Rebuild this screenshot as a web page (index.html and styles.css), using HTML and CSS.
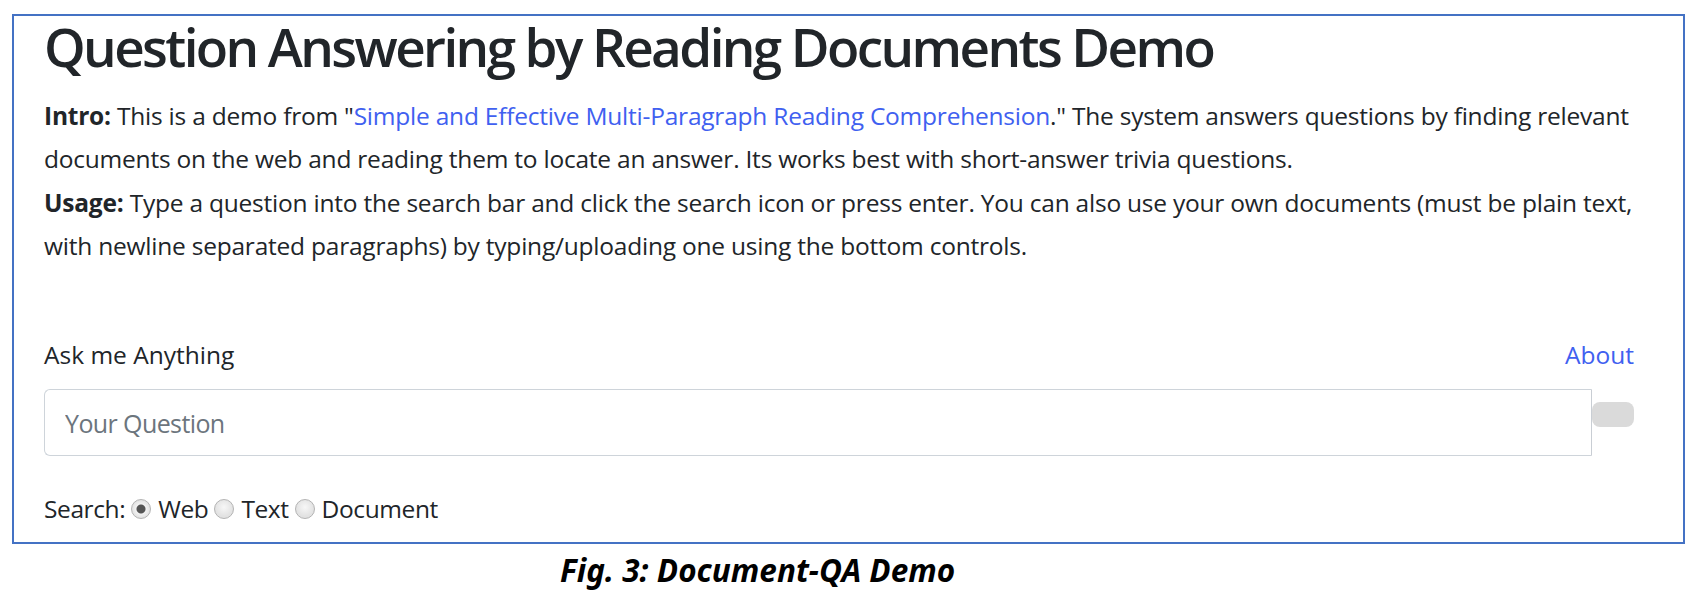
FILE: index.html
```html
<!DOCTYPE html>
<html lang="en">
<head>
<meta charset="utf-8">
<title>Document-QA Demo</title>
<link rel="stylesheet" href="styles.css">
</head>
<body>
<div class="frame">
  <h1 class="title">Question Answering by Reading Documents Demo</h1>
  <p class="intro"><b>Intro:</b> This is a demo from "<a class="link" href="#">Simple and Effective Multi-Paragraph Reading Comprehension</a>." The system answers questions by finding relevant documents on the web and reading them to locate an answer. Its works best with short-answer trivia questions.<br><b>Usage:</b> Type a question into the search bar and click the search icon or press enter. You can also use your own documents (must be plain text, with newline separated paragraphs) by typing/uploading one using the bottom controls.</p>
  <div class="ask-row">
    <span>Ask me Anything</span>
    <a class="link" href="#">About</a>
  </div>
  <div class="input-group">
    <input class="question" type="text" placeholder="Your Question">
    <button class="search-btn" type="button"></button>
  </div>
  <div class="search-row">
    <span>Search:</span>
    <label class="opt"><input class="radio" type="radio" name="src" checked><span>Web</span></label>
    <label class="opt"><input class="radio" type="radio" name="src"><span>Text</span></label>
    <label class="opt"><input class="radio" type="radio" name="src"><span>Document</span></label>
  </div>
</div>
<p class="caption">Fig. 3: Document-QA Demo</p>
</body>
</html>
```
FILE: styles.css
```css
body {
  margin: 0;
  background: #ffffff;
  font-family: "Open Sans", "Noto Sans", sans-serif;
  color: #212529;
}

.frame {
  margin: 14px 0 0 12px;
  width: 1673px;
  box-sizing: border-box;
  border: 2px solid #4472c4;
  padding: 0 49px 11px 30px;
}

.title {
  margin: -1px 0 0;
  font-size: 53px;
  font-weight: 600;
  line-height: 64px;
  letter-spacing: -2.6px;
  white-space: nowrap;
}

.intro {
  margin: 15px 0 0;
  font-size: 24.5px;
  line-height: 43.4px;
  letter-spacing: -0.22px;
}

.intro b {
  font-weight: 700;
}

.link {
  color: #4060f0;
  text-decoration: none;
}

.ask-row {
  margin-top: 65px;
  display: flex;
  justify-content: space-between;
  font-size: 24.5px;
  line-height: 43.5px;
}

.input-group {
  margin-top: 13px;
  display: flex;
  align-items: flex-start;
}

.question {
  flex: 1;
  height: 67px;
  box-sizing: border-box;
  margin: 0;
  border: 1px solid #ced4da;
  border-right-color: #c9ced4;
  border-radius: 6px 0 0 6px;
  padding: 0 20px;
  font-family: "Open Sans", "Noto Sans", sans-serif;
  font-size: 25px;
  letter-spacing: -0.6px;
  color: #495057;
  outline: none;
}

.question::placeholder {
  color: #6c757d;
}

.search-btn {
  flex: none;
  width: 42px;
  height: 25px;
  margin: 13px 0 0;
  padding: 0;
  border: none;
  border-radius: 8px;
  background: #dadada;
}

.search-row {
  margin-top: 31px;
  display: flex;
  align-items: center;
  font-size: 24.5px;
  line-height: 43.5px;
  letter-spacing: -0.4px;
}

.opt {
  display: flex;
  align-items: center;
}

.radio {
  appearance: none;
  -webkit-appearance: none;
  width: 20px;
  height: 20px;
  margin: 0 7px 0 6px;
  box-sizing: border-box;
  border: 1px solid #b3b3b3;
  border-radius: 50%;
  background: radial-gradient(circle at 50% 40%, #f7f7f7 0, #e2e2e2 9px);
}

.radio:checked {
  background: radial-gradient(circle, #555555 0 4px, #f2f2f2 5px, #dedede 10px);
}

.caption {
  margin: 6px 0 0 560px;
  font-family: "Noto Sans", "Open Sans", sans-serif;
  font-size: 31.5px;
  font-weight: 700;
  font-style: italic;
  line-height: 40px;
  color: #000000;
}
```
